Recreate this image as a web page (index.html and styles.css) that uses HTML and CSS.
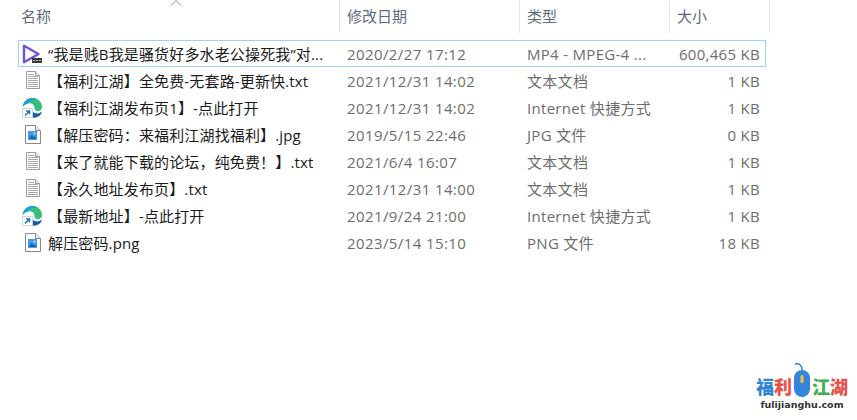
FILE: index.html
```html
<!DOCTYPE html>
<html lang="zh-CN">
<head>
<meta charset="UTF-8">
<meta name="viewport" content="width=device-width, initial-scale=1.0">
<title>文件列表</title>
<link rel="stylesheet" href="styles.css">
</head>
<body>

<svg class="defs" width="0" height="0">
  <symbol id="ico-txt" viewBox="0 0 20 20">
    <path d="M4.500 0.500h9l4 4v13h-13z" fill="#fff" stroke="#9c9c9c"/>
    <path d="M13.500 0.500v4h4" fill="#eee" stroke="#9c9c9c"/>
    <path d="M6 3.500h6M6 5.500h10M6 7.500h10M6 9.500h10M6 11.500h10M6 13.500h10M6 15.500h10" stroke="#a8a8a8"/>
  </symbol>
  <symbol id="ico-img" viewBox="0 0 20 20">
    <path d="M3.500 0.500h10l5 5v13h-15z" fill="#fff" stroke="#868686"/>
    <path d="M13.500 0.500v5h5" fill="#eee" stroke="#868686"/>
    <rect x="6" y="6" width="9" height="8.500" fill="#3f9be8"/>
    <path d="M6 14.500l3.500-4.500 2 2 1-1 2.500 3.500z" fill="#1565c0"/>
    <circle cx="12.500" cy="8.500" r="1" fill="#d5ecfc"/>
  </symbol>
  <symbol id="ico-edge" viewBox="0 0 20 20">
    <path d="M0.500 9C1.500 3 6 0 10.500 0c5.500 0 9.500 4 9.500 9 0 2.500-1.500 4-4 4-2.500 0-4-1.500-3.500-3.500C12 6 9 4.500 6 5.500 3.500 6 1.500 7.500 0.500 9z" fill="#37bd7c"/>
    <path d="M0.500 9C1.500 3 6 0 10.500 0c2 0 3.500 0.500 5 1.500C10 1.500 7 3 6 5.500 3.500 6 1.500 7.500 0.500 9z" fill="#1b9de2"/>
    <path d="M9.500 19.500c5 1 9.500-1.500 10.500-6-3 2.500-6.500 2.500-9 0.500z" fill="#125ea6"/>
    <rect x="0.500" y="10.500" width="10" height="9" fill="#fff" stroke="#d5d5d5"/>
    <path d="M3 17.500l4-4M4.200 13h3.300v3.300" fill="none" stroke="#1f6fc0" stroke-width="1.500"/>
  </symbol>
</svg>

<div class="header">
  <div class="col-name head-cell">
    <svg class="sort" width="12" height="6" viewBox="0 0 12 6"><path d="M1 5.500l5-5 5 5" fill="none" stroke="#8a8a8a"/></svg>
    名称
  </div>
  <div class="col-date head-cell">修改日期</div>
  <div class="col-type head-cell">类型</div>
  <div class="col-size head-cell">大小</div>
</div>

<div class="list">
  <div class="row selected">
    <span class="col-name name">
      <svg class="ico" width="20" height="20" viewBox="0 0 20 20">
        <path d="M2 1.800L16.500 10 2 18.200z" fill="none" stroke="#7350d8" stroke-width="2.400" stroke-linejoin="round"/>
        <rect x="10" y="14" width="10" height="5" fill="#3a3a3a"/>
        <path d="M11 16.500h8" stroke="#bbb" stroke-dasharray="2 1"/>
      </svg>
      <span class="fname">“我是贱B我是骚货好多水老公操死我”对...</span>
    </span>
    <span class="col-date">2020/2/27 17:12</span>
    <span class="col-type">MP4 - MPEG-4 ...</span>
    <span class="col-size">600,465 KB</span>
  </div>
  <div class="row">
    <span class="col-name name"><svg class="ico"><use href="#ico-txt"/></svg><span class="fname">【福利江湖】全免费-无套路-更新快.txt</span></span>
    <span class="col-date">2021/12/31 14:02</span>
    <span class="col-type">文本文档</span>
    <span class="col-size">1 KB</span>
  </div>
  <div class="row">
    <span class="col-name name"><svg class="ico"><use href="#ico-edge"/></svg><span class="fname">【福利江湖发布页1】-点此打开</span></span>
    <span class="col-date">2021/12/31 14:02</span>
    <span class="col-type">Internet 快捷方式</span>
    <span class="col-size">1 KB</span>
  </div>
  <div class="row">
    <span class="col-name name"><svg class="ico"><use href="#ico-img"/></svg><span class="fname">【解压密码：来福利江湖找福利】.jpg</span></span>
    <span class="col-date">2019/5/15 22:46</span>
    <span class="col-type">JPG 文件</span>
    <span class="col-size">0 KB</span>
  </div>
  <div class="row">
    <span class="col-name name"><svg class="ico"><use href="#ico-txt"/></svg><span class="fname">【来了就能下载的论坛，纯免费！】.txt</span></span>
    <span class="col-date">2021/6/4 16:07</span>
    <span class="col-type">文本文档</span>
    <span class="col-size">1 KB</span>
  </div>
  <div class="row">
    <span class="col-name name"><svg class="ico"><use href="#ico-txt"/></svg><span class="fname">【永久地址发布页】.txt</span></span>
    <span class="col-date">2021/12/31 14:00</span>
    <span class="col-type">文本文档</span>
    <span class="col-size">1 KB</span>
  </div>
  <div class="row">
    <span class="col-name name"><svg class="ico"><use href="#ico-edge"/></svg><span class="fname">【最新地址】-点此打开</span></span>
    <span class="col-date">2021/9/24 21:00</span>
    <span class="col-type">Internet 快捷方式</span>
    <span class="col-size">1 KB</span>
  </div>
  <div class="row">
    <span class="col-name name"><svg class="ico"><use href="#ico-img"/></svg><span class="fname">解压密码.png</span></span>
    <span class="col-date">2023/5/14 15:10</span>
    <span class="col-type">PNG 文件</span>
    <span class="col-size">18 KB</span>
  </div>
</div>

<div class="watermark">
  <div class="wm-title">
    <span class="wm-blue">福</span><span class="wm-red">利</span>
    <svg class="wm-mouse" width="18" height="36" viewBox="0 0 18 36">
      <path d="M9 8C9 3 6 1 2 2" fill="none" stroke="#2f7fd8" stroke-width="1.500"/>
      <rect x="1" y="8" width="16" height="27" rx="8" fill="#3584dc"/>
      <rect x="7.500" y="13" width="3" height="8" rx="1.500" fill="#f2c230"/>
    </svg>
    <span class="wm-green">江</span><span class="wm-red">湖</span>
  </div>
  <div class="wm-url">fulijianghu.com</div>
</div>

</body>
</html>
```

FILE: styles.css
```css
body {
  margin: 0;
  width: 857px;
  height: 420px;
  overflow: hidden;
  position: relative;
  background-color: #fff;
  font-family: "Open Sans", "Noto Sans CJK SC", sans-serif;
  font-size: 15px;
  color: #6d6d6d;
}
.defs {
  display: block;
  height: 0;
}
.header {
  display: flex;
  height: 33px;
  margin-bottom: 7px;
}
.head-cell {
  position: relative;
  display: flex;
  align-items: center;
  border-right: 1px solid #e5e5e5;
  box-sizing: border-box;
  padding-left: 7px;
  padding-bottom: 3px;
  color: #5f6b7a;
  font-size: 15px;
}
.head-cell.col-name {
  width: 340px;
  padding-left: 21px;
}
.head-cell.col-date {
  width: 180px;
}
.head-cell.col-type {
  width: 150px;
}
.head-cell.col-size {
  width: 100px;
}
.sort {
  position: absolute;
  top: 0;
  left: 170px;
}
.list {
  width: 748px;
  margin-left: 18px;
}
.row {
  display: flex;
  align-items: center;
  height: 27px;
  box-sizing: border-box;
  border: 1px solid transparent;
}
.row.selected {
  border-color: #99d1ff;
}
.row .col-name {
  width: 321px;
  flex: none;
}
.row .col-date {
  width: 180px;
  flex: none;
  padding-left: 7px;
  box-sizing: border-box;
  letter-spacing: 0.4px;
}
.row .col-type {
  width: 140px;
  flex: none;
  padding-left: 7px;
  box-sizing: border-box;
  letter-spacing: 0.3px;
  white-space: nowrap;
}
.row .col-size {
  width: 105px;
  flex: none;
  text-align: right;
  padding-right: 5px;
  box-sizing: border-box;
  letter-spacing: 0.3px;
}
.name {
  display: flex;
  align-items: center;
  gap: 6px;
  padding-left: 3px;
  box-sizing: border-box;
}
.ico {
  width: 20px;
  height: 20px;
  flex: none;
}
.fname {
  color: #1a1a1a;
  font-size: 15px;
  letter-spacing: 0.15px;
  white-space: nowrap;
}
.watermark {
  position: absolute;
  right: 9px;
  bottom: 10px;
  width: 92px;
  text-align: center;
}
.wm-title {
  display: flex;
  align-items: flex-end;
  justify-content: center;
  font-size: 18px;
  font-weight: 900;
  line-height: 22px;
}
.wm-blue {
  color: #2f86d8;
}
.wm-red {
  color: #e8504a;
}
.wm-green {
  color: #3fae52;
}
.wm-mouse {
  margin: 0 1px;
}
.wm-url {
  font-family: "DejaVu Sans", sans-serif;
  font-size: 9.500px;
  font-weight: bold;
  color: #333;
  line-height: 11px;
  margin-top: 1px;
}
```
